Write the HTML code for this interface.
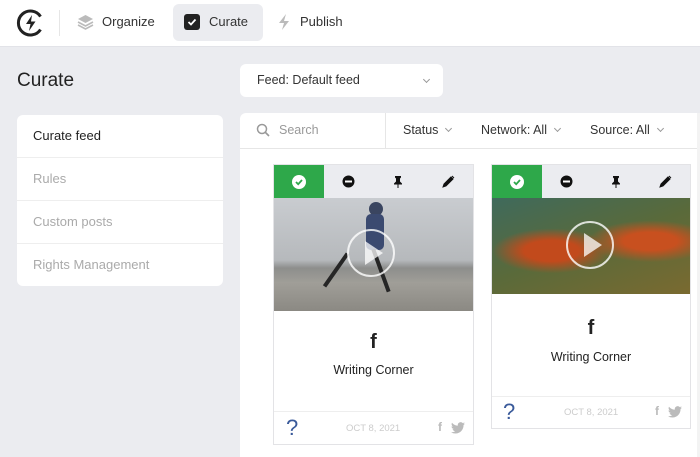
<!DOCTYPE html>
<html><head><style>
*{box-sizing:border-box;margin:0;padding:0}
body{width:700px;height:457px;overflow:hidden;background:#ebecf0;font-family:"Liberation Sans",sans-serif;position:relative;color:#222}
.abs{position:absolute}
.top{left:0;top:0;width:700px;height:47px;background:#fff;border-bottom:1px solid #e2e3e8}
.nav{font-size:13px;color:#333}
.side{left:17px;top:115px;width:206px;height:171px;background:#fff;border-radius:6px}
.side div{height:43px;line-height:42px;padding-left:16px;font-size:13px;color:#aaa;border-bottom:1px solid #eee}
.panel{left:240px;top:113px;width:457px;height:344px;background:#fff;border-radius:6px 0 0 0}
.card{background:#fff;border:1px solid #e3e3e6}
.tb{height:33px;background:#ebecf0;display:flex}
.tb div{flex:1;display:flex;align-items:center;justify-content:center}
.tb div:first-child{background:#2ea84a}
.chev{display:inline-block;width:5px;height:5px;border-right:1px solid #999;border-bottom:1px solid #999;transform:rotate(45deg);margin-left:8px;position:relative;top:-3px}
.foot{position:absolute;left:0;right:0;border-top:1px solid #eee;height:34px}
</style></head><body>
<div class="abs top"></div>
<svg class="abs" style="left:16px;top:8px" width="30" height="30" viewBox="0 0 30 30"><path d="M24.5 8.5 A12 12 0 1 0 24.5 21.5" fill="none" stroke="#222" stroke-width="3"/><path d="M16 7 L10 16 H14.5 L13 23 L19.5 13.5 H15 Z" fill="#222"/></svg>
<div class="abs" style="left:59px;top:10px;width:1px;height:26px;background:#e6e6e6"></div>
<svg class="abs" style="left:77px;top:13px" width="17" height="17" viewBox="0 0 17 17"><path d="M8.5 2 L16 6 L8.5 10 L1 6Z" fill="#bbb"/><path d="M1 9 L8.5 13 L16 9" fill="none" stroke="#bbb" stroke-width="1.6"/><path d="M1 12 L8.5 16 L16 12" fill="none" stroke="#bbb" stroke-width="1.6"/></svg>
<div class="abs nav" style="left:102px;top:14px">Organize</div>
<div class="abs" style="left:173px;top:4px;width:90px;height:37px;background:#ebecf0;border-radius:6px"></div>
<svg class="abs" style="left:184px;top:14px" width="16" height="16"><rect width="16" height="16" rx="3" fill="#222"/><path d="M4.5 8 L7 10.5 L11.5 5.5" fill="none" stroke="#fff" stroke-width="1.8"/></svg>
<div class="abs nav" style="left:209px;top:14px">Curate</div>
<svg class="abs" style="left:277px;top:13px" width="14" height="18" viewBox="0 0 14 18"><path d="M9 1 L2 10 H7 L5 17 L12 8 H7Z" fill="#bbb"/></svg>
<div class="abs nav" style="left:300px;top:14px">Publish</div>

<div class="abs" style="left:17px;top:70px;font-size:19px;color:#222">Curate</div>
<div class="abs" style="left:240px;top:64px;width:203px;height:33px;background:#fff;border-radius:6px;font-size:12.5px;line-height:33px;padding-left:17px;color:#333">Feed: Default feed<span class="chev" style="position:absolute;right:14px;top:13px"></span></div>

<div class="abs side"><div style="color:#222">Curate feed</div><div>Rules</div><div>Custom posts</div><div style="border:none">Rights Management</div></div>

<div class="abs panel"></div>
<div class="abs" style="left:240px;top:148px;width:457px;height:1px;background:#e6e6e6"></div>
<div class="abs" style="left:385px;top:113px;width:1px;height:35px;background:#e6e6e6"></div>
<div class="abs" style="left:697px;top:113px;width:3px;height:344px;background:#f3f3f3"></div>
<svg class="abs" style="left:256px;top:123px" width="14" height="14"><circle cx="6" cy="6" r="4.5" fill="none" stroke="#999" stroke-width="1.5"/><path d="M9.5 9.5 L13 13" stroke="#999" stroke-width="1.6"/></svg>
<div class="abs" style="left:279px;top:123px;font-size:12.5px;color:#999">Search</div>
<div class="abs" style="left:403px;top:123px;font-size:12.5px;color:#333">Status<span class="chev"></span></div>
<div class="abs" style="left:481px;top:123px;font-size:12.5px;color:#333">Network: All<span class="chev"></span></div>
<div class="abs" style="left:590px;top:123px;font-size:12.5px;color:#333">Source: All<span class="chev"></span></div>

<!-- card1 -->
<div class="abs card" style="left:273px;top:164px;width:201px;height:281px">
 <div class="tb"><div><svg width="14" height="14"><circle cx="7" cy="7" r="7" fill="#fff"/><path d="M4 7 L6.2 9.2 L10 5" fill="none" stroke="#2ea84a" stroke-width="1.8"/></svg></div><div><svg width="13" height="13"><circle cx="6.5" cy="6.5" r="6" fill="#111"/><rect x="3" y="5.5" width="7" height="2" fill="#fff"/></svg></div><div><svg width="12" height="13"><path d="M3 1h6v1.5l-1 1v3l2 2v1H2v-1l2-2v-3l-1-1z M5.5 9.5h1V13h-1z" fill="#111"/></svg></div><div><svg width="13" height="13"><path d="M1 12 L2 9 L9 2 L11 4 L4 11Z M10 1 L12 3" fill="#111" stroke="#111" stroke-width="1"/></svg></div></div>
 <div style="height:113px;background:linear-gradient(180deg,#c9ccd0 0%,#b6b9bc 55%,#8d8e8c 62%,#a09e98 75%,#8b8983 100%);position:relative">
  <div style="position:absolute;left:95px;top:4px;width:14px;height:14px;border-radius:50%;background:#3a4560"></div>
  <div style="position:absolute;left:92px;top:16px;width:18px;height:36px;background:#3b4a70;border-radius:5px"></div>
  <div style="position:absolute;left:60px;top:52px;width:4px;height:40px;background:#262626;transform:rotate(35deg)"></div>
  <div style="position:absolute;left:105px;top:50px;width:4px;height:45px;background:#262626;transform:rotate(-20deg)"></div>
  <div style="position:absolute;left:73px;top:31px;width:48px;height:48px;border:2px solid rgba(255,255,255,.8);border-radius:50%"></div>
  <div style="position:absolute;left:91px;top:43px;border-left:18px solid rgba(255,255,255,.75);border-top:12px solid transparent;border-bottom:12px solid transparent"></div>
 </div>
 <div style="text-align:center;font-weight:bold;font-size:20px;margin-top:20px;color:#222">f</div>
 <div style="text-align:center;font-size:12.5px;margin-top:9px;color:#222">Writing Corner</div>
 <div class="foot" style="top:246px"><span style="position:absolute;left:12px;top:3px;font-size:22px;color:#3a5a9a">?</span><span style="position:absolute;left:72px;top:11px;font-size:9.5px;color:#ccc">OCT 8, 2021</span><span style="position:absolute;left:164px;top:8px;font-size:12px;color:#bbb;font-weight:bold">f</span><svg style="position:absolute;left:177px;top:10px" width="14" height="12" viewBox="0 0 24 20"><path d="M24 2.4a10 10 0 0 1-2.8.8A5 5 0 0 0 23.3.4a10 10 0 0 1-3.1 1.2A4.9 4.9 0 0 0 11.8 6 14 14 0 0 1 1.7.9a4.9 4.9 0 0 0 1.5 6.6 4.9 4.9 0 0 1-2.2-.6 4.9 4.9 0 0 0 3.9 4.9 4.9 4.9 0 0 1-2.2.1 4.9 4.9 0 0 0 4.6 3.4A9.9 9.9 0 0 1 0 17.3 14 14 0 0 0 7.5 19.5c9 0 14-7.5 14-14v-.6A10 10 0 0 0 24 2.4z" fill="#bbb"/></svg></div>
</div>

<!-- card2 -->
<div class="abs card" style="left:491px;top:164px;width:200px;height:265px">
 <div class="tb"><div><svg width="14" height="14"><circle cx="7" cy="7" r="7" fill="#fff"/><path d="M4 7 L6.2 9.2 L10 5" fill="none" stroke="#2ea84a" stroke-width="1.8"/></svg></div><div><svg width="13" height="13"><circle cx="6.5" cy="6.5" r="6" fill="#111"/><rect x="3" y="5.5" width="7" height="2" fill="#fff"/></svg></div><div><svg width="12" height="13"><path d="M3 1h6v1.5l-1 1v3l2 2v1H2v-1l2-2v-3l-1-1z M5.5 9.5h1V13h-1z" fill="#111"/></svg></div><div><svg width="13" height="13"><path d="M1 12 L2 9 L9 2 L11 4 L4 11Z M10 1 L12 3" fill="#111" stroke="#111" stroke-width="1"/></svg></div></div>
 <div style="height:96px;background:radial-gradient(ellipse at 30% 55%,#c24a1c 0 14%,transparent 30%),radial-gradient(ellipse at 80% 45%,#c8501f 0 12%,transparent 28%),linear-gradient(160deg,#3f6a5c,#5a6a3a 50%,#7a6a30);position:relative">
  <div style="position:absolute;left:74px;top:23px;width:48px;height:48px;border:2px solid rgba(255,255,255,.8);border-radius:50%"></div>
  <div style="position:absolute;left:92px;top:35px;border-left:18px solid rgba(255,255,255,.75);border-top:12px solid transparent;border-bottom:12px solid transparent"></div>
 </div>
 <div style="text-align:center;font-weight:bold;font-size:20px;margin-top:23px;color:#222">f</div>
 <div style="text-align:center;font-size:12.5px;margin-top:10px;color:#222">Writing Corner</div>
 <div class="foot" style="top:231px"><span style="position:absolute;left:11px;top:2px;font-size:22px;color:#3a5a9a">?</span><span style="position:absolute;left:72px;top:10px;font-size:9.5px;color:#ccc">OCT 8, 2021</span><span style="position:absolute;left:163px;top:7px;font-size:12px;color:#bbb;font-weight:bold">f</span><svg style="position:absolute;left:176px;top:9px" width="14" height="12" viewBox="0 0 24 20"><path d="M24 2.4a10 10 0 0 1-2.8.8A5 5 0 0 0 23.3.4a10 10 0 0 1-3.1 1.2A4.9 4.9 0 0 0 11.8 6 14 14 0 0 1 1.7.9a4.9 4.9 0 0 0 1.5 6.6 4.9 4.9 0 0 1-2.2-.6 4.9 4.9 0 0 0 3.9 4.9 4.9 4.9 0 0 1-2.2.1 4.9 4.9 0 0 0 4.6 3.4A9.9 9.9 0 0 1 0 17.3 14 14 0 0 0 7.5 19.5c9 0 14-7.5 14-14v-.6A10 10 0 0 0 24 2.4z" fill="#bbb"/></svg></div>
</div>
</body></html>
